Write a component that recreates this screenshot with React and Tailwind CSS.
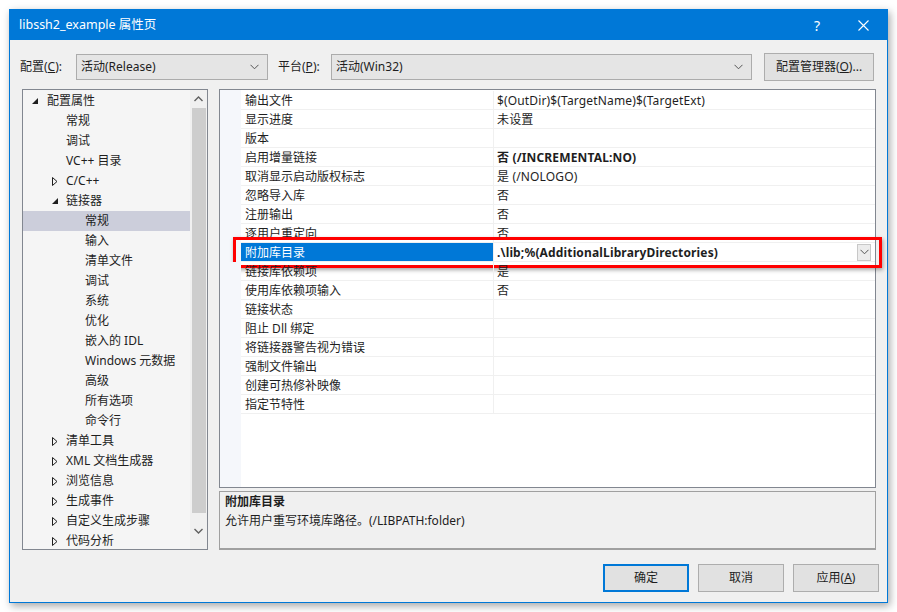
import { useState } from "react";

const FONT = { fontFamily: '"Noto Sans", "Noto Sans CJK SC", sans-serif' };

const tree = [
  { label: "配置属性", level: 0, arrow: "open" },
  { label: "常规", level: 1 },
  { label: "调试", level: 1 },
  { label: "VC++ 目录", level: 1 },
  { label: "C/C++", level: 1, arrow: "closed" },
  { label: "链接器", level: 1, arrow: "open" },
  { label: "常规", level: 2, selected: true },
  { label: "输入", level: 2 },
  { label: "清单文件", level: 2 },
  { label: "调试", level: 2 },
  { label: "系统", level: 2 },
  { label: "优化", level: 2 },
  { label: "嵌入的 IDL", level: 2 },
  { label: "Windows 元数据", level: 2 },
  { label: "高级", level: 2 },
  { label: "所有选项", level: 2 },
  { label: "命令行", level: 2 },
  { label: "清单工具", level: 1, arrow: "closed" },
  { label: "XML 文档生成器", level: 1, arrow: "closed" },
  { label: "浏览信息", level: 1, arrow: "closed" },
  { label: "生成事件", level: 1, arrow: "closed" },
  { label: "自定义生成步骤", level: 1, arrow: "closed" },
  { label: "代码分析", level: 1, arrow: "closed" },
];

const props = [
  ["输出文件", "$(OutDir)$(TargetName)$(TargetExt)"],
  ["显示进度", "未设置"],
  ["版本", ""],
  ["启用增量链接", "否 (/INCREMENTAL:NO)", true],
  ["取消显示启动版权标志", "是 (/NOLOGO)"],
  ["忽略导入库", "否"],
  ["注册输出", "否"],
  ["逐用户重定向", "否"],
  ["附加库目录", ".\\lib;%(AdditionalLibraryDirectories)", true, true],
  ["链接库依赖项", "是"],
  ["使用库依赖项输入", "否"],
  ["链接状态", ""],
  ["阻止 Dll 绑定", ""],
  ["将链接器警告视为错误", ""],
  ["强制文件输出", ""],
  ["创建可热修补映像", ""],
  ["指定节特性", ""],
];

function Chevron({ className = "" }) {
  return (
    <svg width="9" height="6" viewBox="0 0 9 6" className={className}>
      <path d="M0.5 0.8 L4.5 4.8 L8.5 0.8" fill="none" stroke="#555" strokeWidth="1" />
    </svg>
  );
}

function Arrow({ type }) {
  if (type === "open")
    return (
      <svg width="6" height="6" viewBox="0 0 6 6">
        <path d="M6 0 L6 6 L0 6 Z" fill="#1e1e1e" />
      </svg>
    );
  return (
    <svg width="6" height="9" viewBox="0 0 6 9">
      <path d="M0.5 0.5 L5 4.5 L0.5 8.5 Z" fill="none" stroke="#1e1e1e" strokeWidth="1" />
    </svg>
  );
}

function Combo({ text, width }) {
  return (
    <div
      className="h-[26px] flex items-center justify-between border border-[#acacac] bg-[#e5e5e5] pl-[4px] pr-[8px]"
      style={{ width }}
    >
      <span className="text-[12px] text-[#1e1e1e]">{text}</span>
      <Chevron />
    </div>
  );
}

function Button({ children, primary }) {
  return (
    <div
      className={
        "w-[86px] h-[28px] flex items-center justify-center bg-[#e1e1e1] text-[12px] text-[#1e1e1e] " +
        (primary ? "border-2 border-[#0078d7]" : "border border-[#adadad]")
      }
    >
      {children}
    </div>
  );
}

export default function App() {
  const [sel] = useState(8);

  return (
    <div className="w-[897px] h-[612px] bg-white pl-[9px] pt-[9px]" style={FONT}>
      <div className="relative w-[879px] h-[594px] border border-[#0078d7] bg-[#f0f0f0] shadow-[2px_3px_8px_rgba(0,0,0,0.35)] flex flex-col">
        {/* title bar */}
        <div className="h-[30px] bg-[#0078d7] flex items-center pl-[9px] text-white text-[12.5px]">
          <span className="flex-1">libssh2_example 属性页</span>
          <span className="w-[46px] text-center text-[14px]">?</span>
          <span className="w-[46px] flex justify-center mr-[1px]">
            <svg width="11" height="11" viewBox="0 0 11 11">
              <path d="M0.5 0.5 L10.5 10.5 M10.5 0.5 L0.5 10.5" stroke="white" strokeWidth="1.1" />
            </svg>
          </span>
        </div>

        {/* config row */}
        <div className="mt-[13px] h-[28px] flex items-center pl-[10px] text-[12px] text-[#1e1e1e]">
          <span className="w-[56px]">
            配置(<span className="underline">C</span>):
          </span>
          <Combo text="活动(Release)" width={192} />
          <span className="ml-[10px] w-[53px]">
            平台(<span className="underline">P</span>):
          </span>
          <Combo text="活动(Win32)" width={421} />
          <div className="ml-[12px] w-[110px] h-[28px] border border-[#adadad] bg-[#e1e1e1] flex items-center justify-center">
            配置管理器(<span className="underline">O</span>)...
          </div>
        </div>

        {/* main */}
        <div className="mt-[8px] flex pl-[12px] h-[461px]">
          {/* tree */}
          <div className="w-[186px] h-full border border-[#828790] bg-[#f5f5f5] flex overflow-hidden">
            <div className="w-[167px] pt-[1px] text-[12px] text-[#1e1e1e]">
              {tree.map((t, i) => (
                <div
                  key={i}
                  className={"h-[20px] flex items-center " + (t.selected ? "bg-[#cccedb]" : "")}
                >
                  <span
                    className="flex items-center"
                    style={{ width: t.level === 0 ? 24 : t.level === 1 ? 43 : 62, paddingLeft: t.level === 0 ? 9 : 29 }}
                  >
                    {t.arrow && <Arrow type={t.arrow} />}
                  </span>
                  <span className="whitespace-nowrap">{t.label}</span>
                </div>
              ))}
            </div>
            <div className="w-[17px] h-full bg-[#f0f0f0] flex flex-col items-center">
              <div className="h-[18px] flex items-center">
                <svg width="9" height="6" viewBox="0 0 9 6">
                  <path d="M0.5 5 L4.5 1 L8.5 5" fill="none" stroke="#606060" strokeWidth="1.4" />
                </svg>
              </div>
              <div className="w-[14px] h-[405px] bg-[#cdcdcd]" />
              <div className="flex-1 flex items-center">
                <svg width="9" height="6" viewBox="0 0 9 6">
                  <path d="M0.5 1 L4.5 5 L8.5 1" fill="none" stroke="#606060" strokeWidth="1.4" />
                </svg>
              </div>
            </div>
          </div>

          {/* right */}
          <div className="ml-[11px] w-[657px] h-full flex flex-col">
            <div className="h-[399px] border border-[#828790] bg-white flex flex-col">
              <div className="h-[1px] flex">
                <div className="w-[21px] bg-[#f5f7fb]" />
              </div>
              {props.map(([name, value, bold, hl], i) => (
                <div key={i} className="relative h-[19px] flex text-[12px] text-[#1e1e1e]">
                  <div className="w-[21px] bg-[#f5f7fb]" />
                  <div
                    className={
                      "w-[252px] pl-[4px] pt-[2px] flex items-center border-b border-[#f0f0f0] whitespace-nowrap " +
                      (i === sel ? "bg-[#0078d7] text-white" : "")
                    }
                  >
                    {name}
                  </div>
                  <div className="w-[1px] bg-[#f0f0f0]" />
                  <div
                    className={
                      "flex-1 pl-[3px] flex items-center border-b border-[#f0f0f0] whitespace-nowrap " +
                      (bold ? "font-bold" : "")
                    }
                  >
                    <span className="flex-1 pt-[2px] tracking-[0.15px]">{value}</span>
                    {hl && (
                      <div className="w-[14px] h-[17px] mr-[4px] border border-[#c8c8c8] bg-[#ececec] flex items-center justify-center">
                        <Chevron />
                      </div>
                    )}
                  </div>
                  {hl && (
                    <div className="absolute left-[13px] right-[-7px] top-[-6px] bottom-[-6px] border-[3px] border-[#ff0000] shadow-[1px_2px_4px_rgba(0,0,0,0.35)] pointer-events-none" />
                  )}
                </div>
              ))}
              <div className="flex-1 flex">
                <div className="w-[21px] bg-[#f5f7fb]" />
              </div>
            </div>
            <div className="mt-[3px] flex-1 border border-[#a0a0a0] border-b-2 bg-[#f0f0f0] px-[5px] text-[12px] text-[#1e1e1e]">
              <div className="font-bold h-[20px] flex items-center">附加库目录</div>
              <div className="h-[18px] flex items-center">允许用户重写环境库路径。(/LIBPATH:folder)</div>
            </div>
          </div>
        </div>

        {/* buttons */}
        <div className="mt-[14px] flex justify-end gap-[9px] pr-[8px]">
          <Button primary>确定</Button>
          <Button>取消</Button>
          <Button>
            应用(<span className="underline">A</span>)
          </Button>
        </div>
      </div>
    </div>
  );
}
